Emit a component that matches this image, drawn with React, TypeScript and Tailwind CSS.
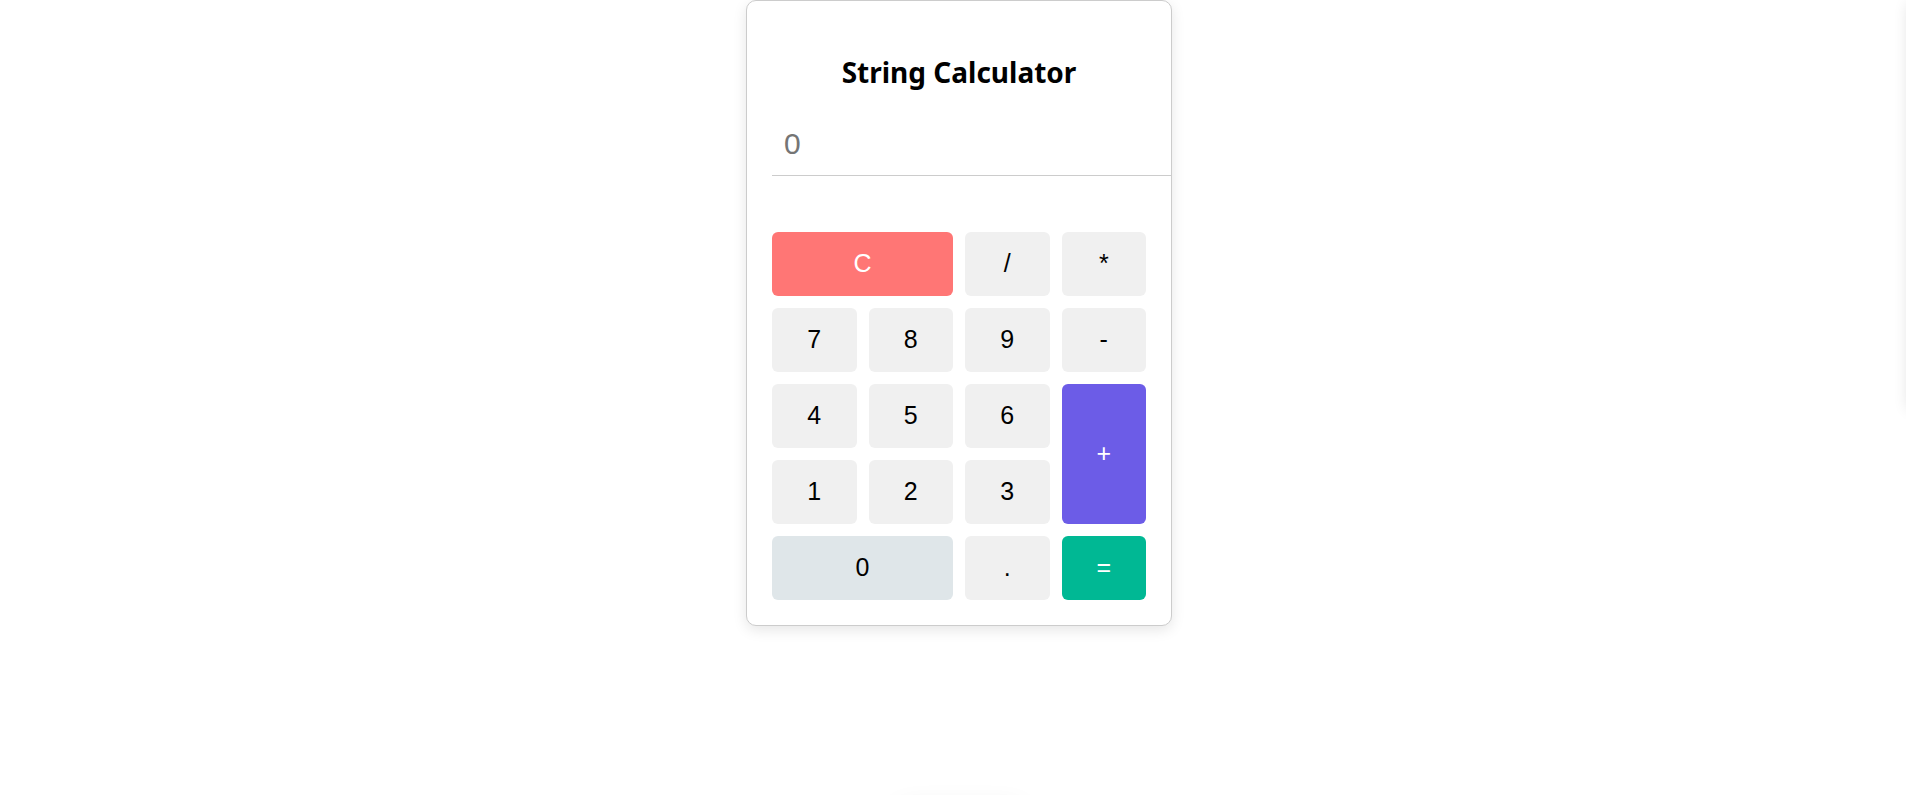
import React, { useState } from 'react';

const keys = [
  { label: 'C', cls: 'col-span-2 bg-[#ff7675] text-white' },
  { label: '/', cls: 'bg-[#f0f0f0] text-black' },
  { label: '*', cls: 'bg-[#f0f0f0] text-black' },
  { label: '7', cls: 'bg-[#f0f0f0] text-black' },
  { label: '8', cls: 'bg-[#f0f0f0] text-black' },
  { label: '9', cls: 'bg-[#f0f0f0] text-black' },
  { label: '-', cls: 'bg-[#f0f0f0] text-black' },
  { label: '4', cls: 'bg-[#f0f0f0] text-black' },
  { label: '5', cls: 'bg-[#f0f0f0] text-black' },
  { label: '6', cls: 'bg-[#f0f0f0] text-black' },
  { label: '+', cls: 'row-span-2 bg-[#6c5ce7] text-white' },
  { label: '1', cls: 'bg-[#f0f0f0] text-black' },
  { label: '2', cls: 'bg-[#f0f0f0] text-black' },
  { label: '3', cls: 'bg-[#f0f0f0] text-black' },
  { label: '0', cls: 'col-span-2 bg-[#dfe6e9] text-black' },
  { label: '.', cls: 'bg-[#f0f0f0] text-black' },
  { label: '=', cls: 'bg-[#00b894] text-white' },
];

export default function App() {
  const [value, setValue] = useState('');

  return (
    <div className="relative h-[795px] overflow-hidden bg-white font-['Liberation_Sans',Arial,sans-serif]">
      <div className="flex justify-center pl-[12px]">
        <div className="w-[426px] overflow-hidden rounded-[10px] border border-[#cccccc] bg-white px-[25px] pb-[25px] shadow-[0_4px_14px_rgba(0,0,0,0.1)]">
          <h2 className="mt-[53px] text-center font-['Noto_Sans',sans-serif] text-[28px] leading-[36px] font-bold text-black">
            String Calculator
          </h2>

          <input
            value={value}
            onChange={(e) => setValue(e.target.value)}
            placeholder="0"
            className="mt-[20px] block h-[66px] w-[400px] border-b border-[#cccccc] px-[12px] pt-[2px] text-[30px] text-black outline-none placeholder:text-[#757575]"
          />

          <div className="mt-[56px] grid w-[374px] grid-cols-4 grid-rows-[repeat(5,64px)] gap-[12px]">
            {keys.map((k) => (
              <button
                key={k.label}
                className={`rounded-[6px] text-[25px] ${k.cls}`}
              >
                {k.label}
              </button>
            ))}
          </div>
        </div>
      </div>

      <div className="absolute top-0 left-[1908px] h-[405px] w-[300px] bg-white shadow-[0_4px_14px_rgba(0,0,0,0.12)]" />
      <div className="absolute top-[812px] left-[900px] h-[60px] w-[120px] bg-white shadow-[0_0_30px_rgba(0,0,0,0.12)]" />
    </div>
  );
}
